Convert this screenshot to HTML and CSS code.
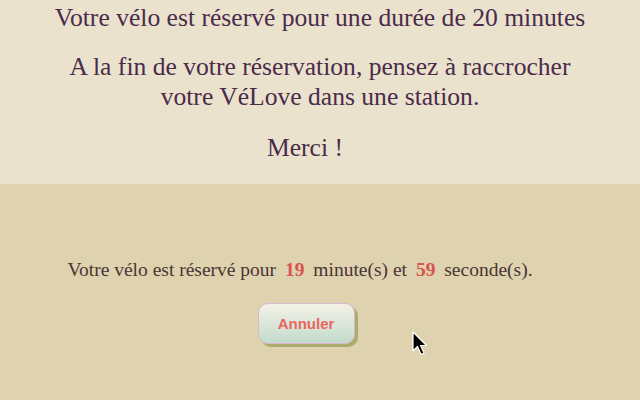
FILE: index.html
```html
<!DOCTYPE html>
<html lang="fr">
<head>
<meta charset="utf-8">
<link rel="stylesheet" href="styles.css">
</head>
<body>
<section class="notice">
  <h2 class="title">Votre vélo est réservé pour une durée de 20 minutes</h2>
  <p class="info">A la fin de votre réservation, pensez à raccrocher<br>votre VéLove dans une station.</p>
  <p class="thanks">Merci !</p>
</section>
<section class="timer">
  <p class="countdown">Votre vélo est réservé pour <span class="num">19</span> minute(s) et <span class="num">59</span> seconde(s).</p>
  <button class="cancel">Annuler</button>
  <svg class="cursor" width="16" height="26" viewBox="0 0 16 26"><path d="M1 1 L1 20 L5.5 15.5 L9 23.5 L12 22 L8.5 14.5 L14.5 14.5 Z" fill="#000" stroke="#fff" stroke-width="1.2" stroke-linejoin="round"/></svg>
</section>
</body>
</html>
```
FILE: styles.css
```css
html, body {
  margin: 0;
  padding: 0;
}
body {
  width: 640px;
  height: 400px;
  overflow: hidden;
  background: #ded2af;
  font-family: "Liberation Serif", serif;
}
.notice {
  background: #ebe2cd;
  height: 184px;
  box-sizing: border-box;
  padding-top: 3px;
  text-align: center;
  color: #4a2b4a;
}
.title {
  margin: 0;
  font-weight: normal;
  font-size: 25.6px;
  line-height: 30px;
}
.info {
  margin: 19px 0 0;
  font-size: 25.6px;
  line-height: 30px;
}
.thanks {
  margin: 21px 0 0;
  padding-right: 30px;
  font-size: 25.6px;
  line-height: 30px;
}
.timer {
  position: relative;
  display: flex;
  flex-direction: column;
  align-items: center;
  padding-right: 40px;
}
.countdown {
  margin: 75px 0 0;
  font-size: 19.5px;
  line-height: 22px;
  color: #4a3535;
}
.num {
  color: #d9534f;
  font-weight: bold;
  margin: 0 4px;
}
.cancel {
  margin-top: 22px;
  margin-left: 12px;
  width: 97px;
  height: 41px;
  border: 1px solid #d9b8cf;
  border-radius: 10px;
  background: linear-gradient(#f4f1e8, #c2dbcb);
  box-shadow: 3px 3px 0 #a9ac6c;
  color: #e8665d;
  font-family: "Liberation Sans", Arial, sans-serif;
  font-weight: bold;
  font-size: 15px;
}
.cursor {
  position: absolute;
  left: 412px;
  top: 147px;
}
```
